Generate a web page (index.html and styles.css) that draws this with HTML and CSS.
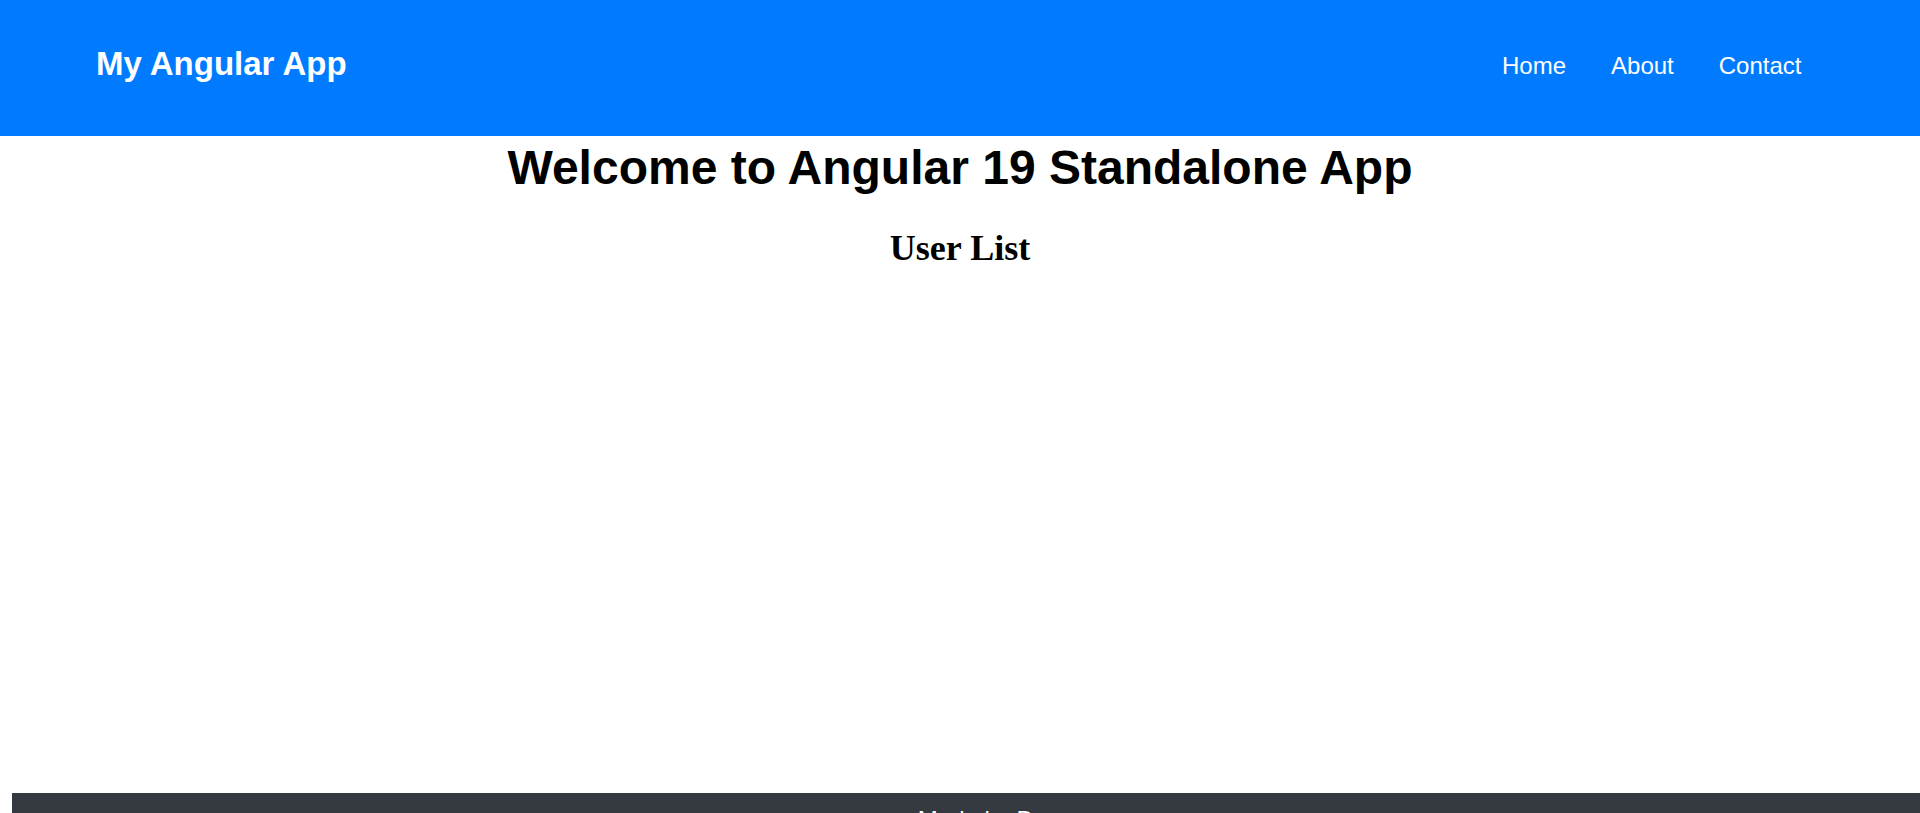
FILE: index.html
```html
<!DOCTYPE html>
<html lang="en">
<head>
<meta charset="utf-8">
<title>My Angular App</title>
<link rel="stylesheet" href="styles.css">
</head>
<body>
<header class="app-header">
  <div class="brand">My Angular App</div>
  <nav class="nav">
    <a class="nav-link" href="#">Home</a>
    <a class="nav-link" href="#">About</a>
    <a class="nav-link" href="#">Contact</a>
  </nav>
</header>
<main class="content">
  <h1 class="welcome">Welcome to Angular 19 Standalone App</h1>
  <h2 class="user-list-title">User List</h2>
</main>
<footer class="app-footer">Made by Devs</footer>
</body>
</html>
```

FILE: styles.css
```css
html, body {
  margin: 0;
  padding: 0;
}

body {
  background: #ffffff;
  overflow-x: hidden;
  font-family: "Liberation Serif", "Times New Roman", serif;
}

.app-header {
  display: flex;
  align-items: center;
  justify-content: space-between;
  height: 136px;
  padding: 0 96px;
  box-sizing: border-box;
  background: #007bff;
  color: #ffffff;
  font-family: "Liberation Sans", Arial, sans-serif;
}

.brand {
  font-size: 33px;
  font-weight: bold;
  margin-top: -8px;
}

.nav {
  display: flex;
  margin-top: -5px;
}

.nav-link {
  color: #ffffff;
  text-decoration: none;
  font-size: 24px;
  margin: 0 22.5px;
}

.content {
  min-height: 657px;
  padding-top: 4px;
  box-sizing: border-box;
  text-align: center;
}

.welcome {
  margin: 0;
  font-family: "Liberation Sans", Arial, sans-serif;
  font-size: 48px;
  font-weight: bold;
  color: #000000;
}

.user-list-title {
  margin: 32px 0 0;
  font-family: "Liberation Serif", "Times New Roman", serif;
  font-size: 36px;
  font-weight: bold;
  color: #000000;
}

.app-footer {
  margin-left: 12px;
  width: 100%;
  padding: 13px 22.5px;
  background: #343a40;
  color: #ffffff;
  text-align: center;
  font-family: "Liberation Sans", Arial, sans-serif;
  font-size: 24px;
}
```
